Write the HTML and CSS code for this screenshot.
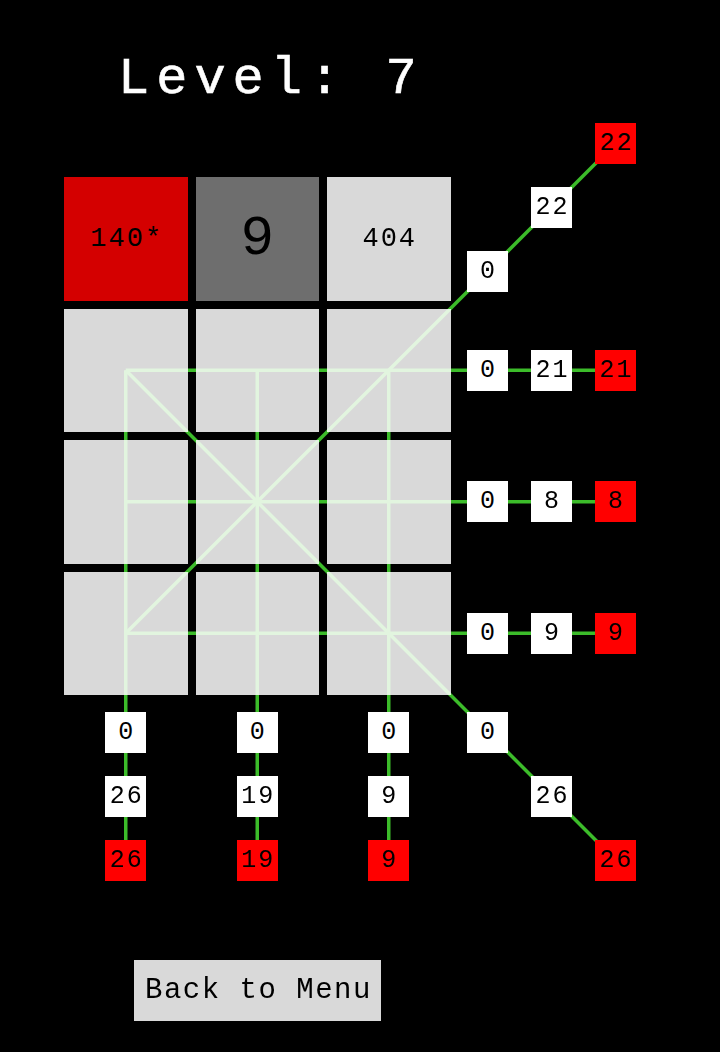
FILE: index.html
```html
<!DOCTYPE html>
<html>
<head>
<meta charset="utf-8">
<link rel="stylesheet" href="styles.css">
</head>
<body>
<div class="page">
  <div class="title">Level: 7</div>
  <div class="board">
    <div class="cell status red"><span class="small">140*</span></div>
    <div class="cell status dark"><span class="big">9</span></div>
    <div class="cell status"><span class="small">404</span></div>
    <div class="stair stair-up">
      <div class="box b-r3c1">0</div>
      <div class="box b-r2c2">22</div>
      <div class="box hot b-r1c3">22</div>
    </div>

    <div class="cell"></div><div class="cell"></div><div class="cell"></div>
    <div class="rrow"><div class="box">0</div><div class="box">21</div><div class="box hot">21</div></div>

    <div class="cell"></div><div class="cell"></div><div class="cell"></div>
    <div class="rrow"><div class="box">0</div><div class="box">8</div><div class="box hot">8</div></div>

    <div class="cell"></div><div class="cell"></div><div class="cell"></div>
    <div class="rrow"><div class="box">0</div><div class="box">9</div><div class="box hot">9</div></div>

    <div class="bstack"><div class="box">0</div><div class="box">26</div><div class="box hot">26</div></div>
    <div class="bstack"><div class="box">0</div><div class="box">19</div><div class="box hot">19</div></div>
    <div class="bstack"><div class="box">0</div><div class="box">9</div><div class="box hot">9</div></div>
    <div class="stair stair-down">
      <div class="box b-r1c1">0</div>
      <div class="box b-r2c2">26</div>
      <div class="box hot b-r3c3">26</div>
    </div>

    <svg class="lines" width="580" height="720" viewBox="0 0 580 720">
      <g stroke="#3cbc2a" stroke-width="3.5" fill="none" stroke-linecap="butt">
        <line x1="61.75" y1="193.25" x2="551.5" y2="193.25"/>
        <line x1="61.75" y1="324.75" x2="551.5" y2="324.75"/>
        <line x1="61.75" y1="456.25" x2="551.5" y2="456.25"/>
        <line x1="61.75" y1="193.25" x2="61.75" y2="683"/>
        <line x1="193.25" y1="193.25" x2="193.25" y2="683"/>
        <line x1="324.75" y1="193.25" x2="324.75" y2="683"/>
        <line x1="61.75" y1="193.25" x2="551.5" y2="683"/>
        <line x1="61.75" y1="456.25" x2="551.5" y2="-33.5"/>
      </g>
    </svg>
  </div>
  <button class="btn">Back to Menu</button>
</div>
</body>
</html>
```
FILE: styles.css
```css
html, body {
  margin: 0;
  padding: 0;
  background: #000;
}
body {
  width: 720px;
  height: 1052px;
  overflow: hidden;
  font-family: "Liberation Mono", "DejaVu Sans Mono", monospace;
}
.page {
  padding-left: 64px;
}
.title {
  box-sizing: border-box;
  height: 177px;
  padding-top: 50px;
  padding-left: 54px;
  font-size: 52px;
  line-height: 60px;
  letter-spacing: 7px;
  color: #fff;
  white-space: pre;
  -webkit-text-stroke: 0.6px #fff;
}
.board {
  position: relative;
  display: grid;
  grid-template-columns: repeat(3, 123.5px) 186px;
  grid-template-rows: repeat(4, 123.5px) auto;
  gap: 8px;
  width: 580.5px;
}
.cell {
  background: #d9d9d9;
}
.status {
  display: flex;
  align-items: center;
  justify-content: center;
  color: #000;
  position: relative;
  z-index: 2;
}
.status.red { background: #d40000; }
.status.dark { background: #6e6e6e; }
.small {
  font-size: 27px;
  letter-spacing: 2px;
  margin-right: -2px;
}
.big {
  font-size: 56px;
  line-height: 1;
}
.box {
  position: relative;
  z-index: 2;
  width: 41px;
  height: 41px;
  background: #fff;
  color: #000;
  display: flex;
  align-items: center;
  justify-content: center;
  font-size: 25px;
  letter-spacing: 2px;
  text-indent: 2px;
}
.box.hot {
  background: #ff0000;
}
.rrow {
  display: flex;
  align-items: center;
  gap: 23px;
  padding-left: 8.5px;
}
.bstack {
  display: flex;
  flex-direction: column;
  align-items: center;
  gap: 23px;
  padding-top: 8.5px;
}
.stair {
  display: grid;
  grid-template-columns: repeat(3, 41px);
  grid-template-rows: repeat(3, 41px);
  gap: 23px;
  padding-left: 8.5px;
}
.stair-up {
  margin-top: -54px;
  align-self: start;
}
.stair-down {
  padding-top: 8.5px;
  align-self: start;
}
.b-r1c1 { grid-row: 1; grid-column: 1; }
.b-r2c2 { grid-row: 2; grid-column: 2; }
.b-r3c3 { grid-row: 3; grid-column: 3; }
.b-r3c1 { grid-row: 3; grid-column: 1; }
.b-r1c3 { grid-row: 1; grid-column: 3; }
.lines {
  position: absolute;
  left: 0;
  top: 0;
  overflow: visible;
  mix-blend-mode: screen;
  pointer-events: none;
  z-index: 1;
}
.btn {
  display: flex;
  align-items: center;
  box-sizing: border-box;
  margin: 79.5px 0 0 70px;
  width: 247px;
  height: 61px;
  padding: 0 0 0 11px;
  border: none;
  border-radius: 0;
  background: #d9d9d9;
  color: #000;
  font-family: "Liberation Mono", "DejaVu Sans Mono", monospace;
  font-size: 29px;
  letter-spacing: 1.5px;
}
```
